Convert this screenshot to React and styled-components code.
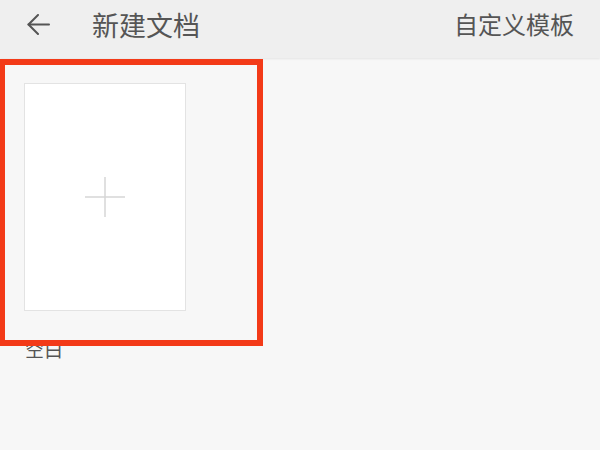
import React from "react";
import styled, { createGlobalStyle } from "styled-components";

const Global = createGlobalStyle`
  html, body { margin: 0; padding: 0; }
  body {
    width: 600px;
    height: 450px;
    overflow: hidden;
    background: #f7f7f7;
    font-family: "Noto Sans CJK SC", "Noto Sans", sans-serif;
  }
`;

const Page = styled.div`
  position: relative;
  width: 600px;
  height: 450px;
  background: #f7f7f7;
  display: flex;
  flex-direction: column;
`;

const Header = styled.header`
  height: 58px;
  box-sizing: border-box;
  padding: 0 26px 10px 27px;
  display: flex;
  align-items: center;
  background: #efefef;
  box-shadow: 0 1px 2px rgba(0, 0, 0, 0.08);
  position: relative;
  z-index: 1;
`;

const BackButton = styled.button`
  border: 0;
  background: none;
  padding: 0;
  width: 23px;
  height: 21px;
  display: flex;
  color: #555;
  cursor: pointer;
`;

const Title = styled.h1`
  margin: 0 0 0 42px;
  font-size: 27px;
  font-weight: 400;
  line-height: 1;
  color: #555;
  flex: 1;
`;

const Action = styled.span`
  font-size: 24px;
  line-height: 1;
  color: #555;
`;

const Content = styled.main`
  padding: 25px 0 0 24px;
  display: flex;
  flex-direction: column;
  align-items: flex-start;
`;

const Template = styled.div`
  display: flex;
  flex-direction: column;
`;

const Card = styled.div`
  width: 162px;
  height: 228px;
  box-sizing: border-box;
  background: #fff;
  border: 1px solid #e3e3e3;
  display: flex;
  align-items: center;
  justify-content: center;
`;

const Label = styled.div`
  margin-top: 28px;
  margin-left: 1px;
  font-size: 19px;
  line-height: 1;
  color: #555;
`;

const Highlight = styled.div`
  position: absolute;
  left: 0;
  top: 59px;
  width: 263px;
  height: 287px;
  box-sizing: border-box;
  border: 6px solid #f33a18;
  border-left-width: 5px;
  z-index: 2;
  pointer-events: none;
`;

export default function App() {
  return (
    <Page>
      <Global />
      <Header>
        <BackButton aria-label="返回">
          <svg width="23" height="21" viewBox="0 0 23 21" fill="none" stroke="currentColor" strokeWidth="2" strokeLinecap="round" strokeLinejoin="round">
            <path d="M22 10.5H1.5" />
            <path d="M11 1L1.5 10.5L11 20" />
          </svg>
        </BackButton>
        <Title>新建文档</Title>
        <Action>自定义模板</Action>
      </Header>
      <Content>
        <Template>
          <Card>
            <svg width="42" height="42" viewBox="0 0 42 42" stroke="#d6d6d6" strokeWidth="1.5">
              <path d="M21 1V41" />
              <path d="M1 21H41" />
            </svg>
          </Card>
          <Label>空白</Label>
        </Template>
      </Content>
      <Highlight />
    </Page>
  );
}
